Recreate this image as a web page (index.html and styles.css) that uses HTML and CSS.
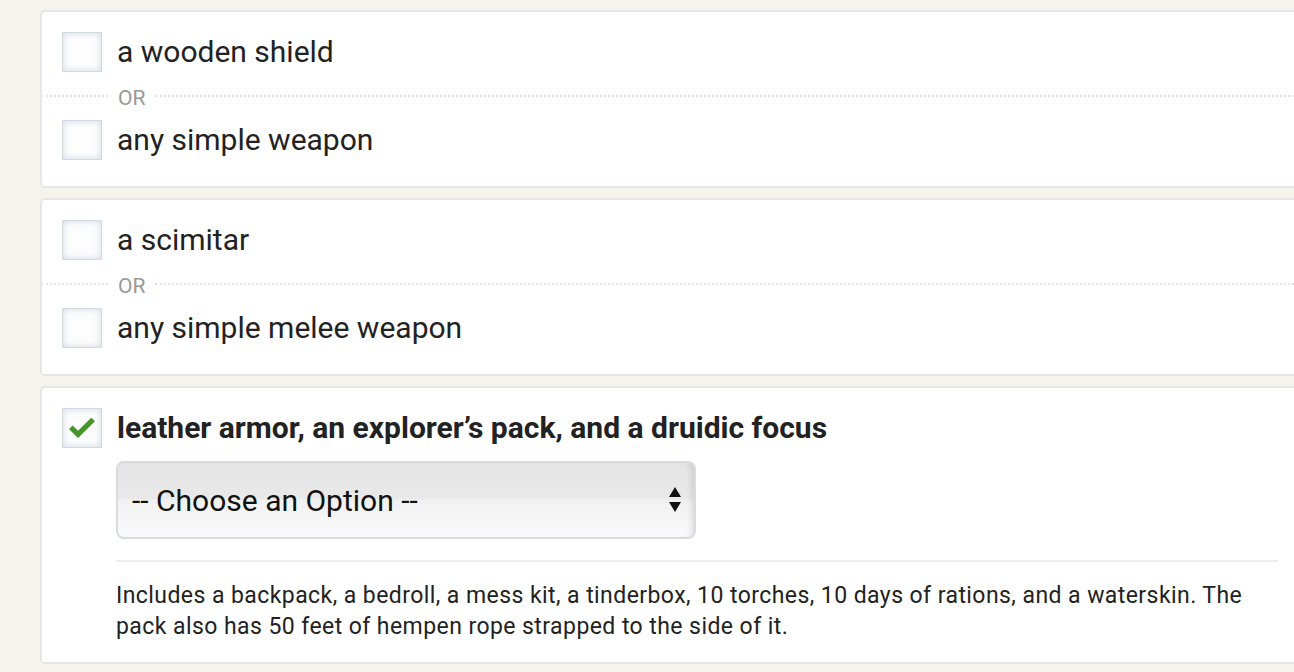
FILE: index.html
```html
<!DOCTYPE html>
<html>
<head>
<meta charset="utf-8">
<link rel="stylesheet" href="styles.css">
</head>
<body>
<div class="page">
  <div class="card">
    <div class="row">
      <span class="box"></span>
      <span class="label">a wooden shield</span>
    </div>
    <div class="sep"><span class="sep-lead"></span><span class="or">OR</span><span class="sep-line"></span></div>
    <div class="row">
      <span class="box"></span>
      <span class="label">any simple weapon</span>
    </div>
  </div>

  <div class="card">
    <div class="row">
      <span class="box"></span>
      <span class="label">a scimitar</span>
    </div>
    <div class="sep"><span class="sep-lead"></span><span class="or">OR</span><span class="sep-line"></span></div>
    <div class="row">
      <span class="box"></span>
      <span class="label">any simple melee weapon</span>
    </div>
  </div>

  <div class="card card-last">
    <div class="row">
      <span class="box checked">
        <svg viewBox="0 0 28 20" width="28" height="20"><path d="M1 10.5 L4.6 6.9 L10 12.3 L23.4 -0.9 L27 2.7 L10 19.5 Z" fill="#45952b" transform="translate(0,0.5)"/></svg>
      </span>
      <span class="label bold">leather armor, an explorer’s pack, and a druidic focus</span>
    </div>
    <div class="detail">
      <div class="select">
        <span class="select-text">-- Choose an Option --</span>
        <span class="arrows">
          <svg viewBox="0 0 14 28" width="14" height="28"><path d="M7 1 L13 11 L1 11 Z" fill="#111"/><path d="M1 16 L13 16 L7 26 Z" fill="#111"/></svg>
        </span>
      </div>
      <div class="rule"></div>
      <p class="desc">Includes a backpack, a bedroll, a mess kit, a tinderbox, 10 torches, 10 days of rations, and a waterskin. The pack also has 50 feet of hempen rope strapped to the side of it.</p>
    </div>
  </div>
</div>
</body>
</html>
```

FILE: styles.css
```css
html, body {
  margin: 0;
  padding: 0;
}
body {
  background: #f5f4ec;
  font-family: Roboto, "Liberation Sans", sans-serif;
  color: #222;
  overflow: hidden;
  width: 1294px;
  height: 672px;
}
.page {
  padding: 10px 0 0 40px;
  display: flex;
  flex-direction: column;
  gap: 10px;
}
.card {
  width: 1220px;
  background: #fff;
  border: 2px solid #e6e6e4;
  border-radius: 5px;
  padding: 20px 20px 26px 20px;
}
.row {
  display: flex;
  align-items: center;
  gap: 15px;
  height: 40px;
}
.box {
  width: 38px;
  height: 38px;
  flex: none;
  border: 1px solid #d4dae1;
  background: #fdfdfe;
  box-shadow: inset 0 0 7px rgba(170, 185, 205, 0.55);
  display: flex;
  align-items: center;
  justify-content: center;
}
.label {
  font-size: 30px;
  line-height: 40px;
  white-space: nowrap;
}
.bold {
  font-weight: 700;
  font-size: 30px;
}
.sep {
  display: flex;
  align-items: center;
  height: 48px;
  margin: 0 -20px 0 -21px;
}
.sep-lead {
  width: 67px;
  border-top: 2px dotted #e2e2e2;
}
.sep-line {
  flex: 1;
  border-top: 2px dotted #e2e2e2;
}
.or {
  font-size: 21px;
  line-height: 21px;
  color: #999;
  padding: 4px 10px 0 10px;
}
.card-last {
  padding-bottom: 20px;
}
.detail {
  padding-left: 54px;
  padding-top: 13px;
  width: 1162px;
}
.select {
  border: 2px solid #d8dce0;
  border-radius: 8px;
  background: linear-gradient(to bottom, #e4e4e4 0%, #e9e9e9 48%, #f0f0f0 50%, #fbfbfb 100%);
  box-shadow: inset -6px 0 6px -4px rgba(0,0,0,0.12);
  display: flex;
  align-items: center;
  justify-content: space-between;
  padding: 0 12px 0 14px;
  box-sizing: border-box;
  width: 580px;
  height: 78px;
}
.select-text {
  font-size: 30px;
  color: #111;
}
.arrows {
  display: flex;
  align-items: center;
}
.rule {
  height: 2px;
  background: #ececec;
  margin-top: 21px;
}
.desc {
  margin: 18px 0 0 0;
  font-size: 23px;
  letter-spacing: 0.43px;
  line-height: 31px;
  color: #222;
}
```
